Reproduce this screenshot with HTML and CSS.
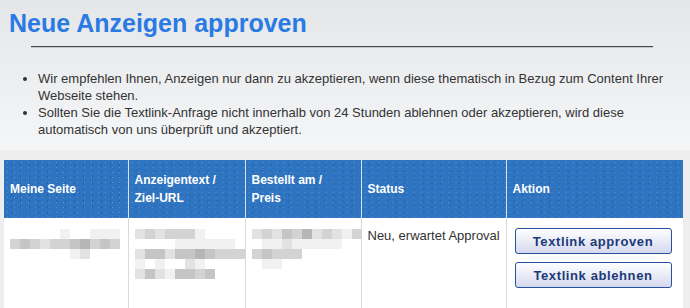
FILE: index.html
```html
<!DOCTYPE html>
<html lang="de">
<head>
    <meta charset="UTF-8">
    <meta name="viewport" content="width=device-width, initial-scale=1.0">
    <title>Neue Anzeigen approven</title>
    <link rel="stylesheet" href="styles.css">
</head>
<body>
  <div class="intro">
    <h1>Neue Anzeigen approven</h1>
    <hr class="rule">
    <ul class="notes">
      <li>Wir empfehlen Ihnen, Anzeigen nur dann zu akzeptieren, wenn diese thematisch in Bezug zum Content Ihrer Webseite stehen.</li>
      <li>Sollten Sie die Textlink-Anfrage nicht innerhalb von 24 Stunden ablehnen oder akzeptieren, wird diese automatisch von uns überprüft und akzeptiert.</li>
    </ul>
  </div>

  <div class="list">
    <table class="orders">
      <colgroup>
        <col class="c1">
        <col class="c2">
        <col class="c3">
        <col class="c4">
        <col class="c5">
      </colgroup>
      <thead>
        <tr>
          <th>Meine Seite</th>
          <th>Anzeigentext /<br>Ziel-URL</th>
          <th>Bestellt am /<br>Preis</th>
          <th>Status</th>
          <th>Aktion</th>
        </tr>
      </thead>
      <tbody>
        <tr>
          <td>
            <div class="blur">
              <div><i></i><i></i><i></i><i></i><i></i><i class="a"></i><i></i><i></i><i class="a"></i><i class="a"></i><i class="a"></i></div>
              <div><i class="c"></i><i class="d"></i><i class="c"></i><i class="b"></i><i class="c"></i><i class="c"></i><i class="d"></i><i class="e"></i><i class="c"></i><i class="d"></i><i class="c"></i></div>
              <div><i></i><i></i><i></i><i></i><i></i><i></i><i class="a"></i><i class="b"></i></div>
            </div>
          </td>
          <td>
            <div class="blur">
              <div><i class="b"></i><i class="c"></i><i class="b"></i><i class="c"></i><i class="c"></i><i class="c"></i><i class="a"></i></div>
              <div><i></i><i></i><i></i><i></i><i class="a"></i><i class="a"></i><i class="a"></i><i class="a"></i><i class="a"></i><i class="a"></i></div>
              <div><i class="b"></i><i class="d"></i><i class="d"></i><i class="b"></i><i class="d"></i><i class="d"></i><i class="e"></i><i class="d"></i><i class="c"></i><i class="c"></i><i class="c"></i></div>
              <div><i class="a"></i><i></i><i class="a"></i><i></i><i></i><i class="b"></i><i class="a"></i></div>
              <div><i class="b"></i><i class="d"></i><i class="b"></i><i class="a"></i><i class="d"></i><i class="d"></i><i class="c"></i><i class="d"></i></div>
            </div>
          </td>
          <td>
            <div class="blur">
              <div><i class="b"></i><i class="c"></i><i class="b"></i><i class="d"></i><i class="c"></i><i class="e"></i><i class="b"></i><i class="c"></i><i class="b"></i><i class="a"></i><i class="c"></i></div>
              <div><i></i><i class="a"></i><i class="a"></i><i class="b"></i><i class="a"></i><i class="a"></i><i class="a"></i><i class="a"></i><i class="a"></i></div>
              <div><i class="c"></i><i class="d"></i><i class="c"></i><i class="c"></i><i class="c"></i></div>
              <div><i></i><i class="a"></i><i class="a"></i></div>
            </div>
          </td>
          <td class="status">Neu, erwartet Approval</td>
          <td>
            <div class="actions">
              <button class="btn">Textlink approven</button>
              <button class="btn">Textlink ablehnen</button>
            </div>
          </td>
        </tr>
      </tbody>
    </table>
  </div>
</body>
</html>
```

FILE: styles.css
```css
body {
    margin: 0;
    background-color: #eeeeee;
    font-family: 'Liberation Sans', Arial, sans-serif;
    color: #333333;
}

/* Kopfbereich */
.intro {
    height: 150px;
    padding: 8px 0 0 9px;
    box-sizing: border-box;
    background: linear-gradient(#e4e6e8, #f5f6f7);
}

.intro h1 {
    margin: 0;
    font-size: 25px;
    line-height: 30px;
    font-weight: bold;
    color: #2a7ae4;
}

.rule {
    margin: 8px 0 0 22px;
    width: 622px;
    height: 0;
    border: 0;
    border-top: 1px solid #4a4a4a;
    border-bottom: 1px solid #c4c6c8;
}

.notes {
    margin: 22px 0 0 0;
    padding-left: 29px;
    font-size: 13px;
    line-height: 17px;
    width: 640px;
}

/* Tabelle */
.list {
    padding: 10px 0 0 4px;
}

.orders {
    border-collapse: collapse;
    table-layout: fixed;
    width: 679px;
    background-color: #ffffff;
    border-bottom: 3px solid #2f74c0;
}

.c1 { width: 124px; }
.c2 { width: 117px; }
.c3 { width: 116px; }
.c4 { width: 145px; }
.c5 { width: 177px; }

.orders th {
    height: 58px;
    padding: 0 6px;
    text-align: left;
    font-size: 12px;
    line-height: 18px;
    color: #ffffff;
    background-color: #2f74c0;
    background-image:
        radial-gradient(circle, #5b93d4 0.6px, transparent 0.9px),
        radial-gradient(circle, #24609e 0.6px, transparent 0.9px);
    background-size: 7px 5px, 9px 6px;
    background-position: 0 0, 3px 2px;
    border-right: 1px solid #d6e2f0;
    vertical-align: middle;
}

.orders th:last-child {
    border-right: 0;
}

.orders td {
    height: 80px;
    padding: 11px 6px 0 6px;
    vertical-align: top;
    border-right: 1px solid #dadada;
    border-bottom: 1px solid #cccccc;
    font-size: 13px;
    line-height: 17px;
}

.orders td:last-child {
    border-right: 0;
}

.orders td.status {
    padding: 9px 0 0 6px;
    white-space: nowrap;
}

/* verpixelte Inhalte */
.blur div {
    display: flex;
    height: 10px;
}

.blur i {
    width: 10px;
    height: 10px;
    flex-shrink: 0;
}

.blur .a { background-color: #f1f1f1; }
.blur .b { background-color: #e2e2e2; }
.blur .c { background-color: #d3d3d3; }
.blur .d { background-color: #c5c5c5; }
.blur .e { background-color: #b6b6b6; }

/* Buttons */
.actions {
    display: flex;
    flex-direction: column;
    gap: 8px;
    padding-left: 2px;
    margin-top: -1px;
}

.btn {
    width: 157px;
    height: 26px;
    padding: 0;
    border: 1px solid #27509e;
    border-radius: 3px;
    background: linear-gradient(#ffffff, #eceef8 45%, #d5d9ee);
    font-family: 'Liberation Sans', Arial, sans-serif;
    font-size: 13px;
    font-weight: bold;
    letter-spacing: 0.6px;
    color: #1b3a78;
    cursor: pointer;
}
```
